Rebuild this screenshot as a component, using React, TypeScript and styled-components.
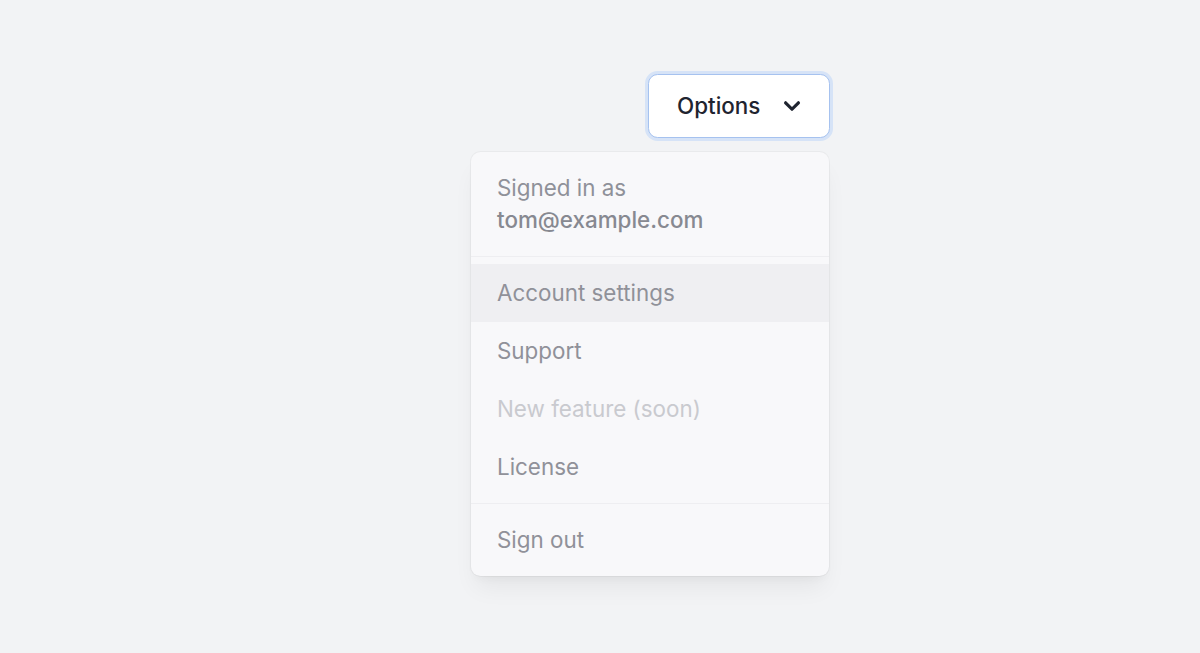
import React from "react";
import styled, { createGlobalStyle } from "styled-components";

const Global = createGlobalStyle`
  html, body { margin: 0; padding: 0; background: #f2f3f5; }
  body { font-family: Inter, "Noto Sans", "Liberation Sans", sans-serif; -webkit-font-smoothing: antialiased; }
`;

const Page = styled.div`
  width: 1200px;
  height: 653px;
  box-sizing: border-box;
  display: flex;
  align-items: flex-start;
  padding: 74px 0 0 648px;
`;

const MenuRoot = styled.div`
  position: relative;
  display: inline-block;
`;

const Trigger = styled.button`
  display: inline-flex;
  align-items: center;
  justify-content: flex-start;
  box-sizing: border-box;
  width: 182px;
  height: 64px;
  padding: 0 0 0 28px;
  background: #ffffff;
  border: 1.6px solid #a6c2ef;
  border-radius: 9.6px;
  box-shadow: 0 0 0 3px #d6e3f7;
  font-family: inherit;
  font-size: 22.4px;
  font-weight: 500;
  line-height: 32px;
  color: #1f2430;
  cursor: pointer;
`;

const Chevron = styled.svg`
  width: 32px;
  height: 32px;
  margin-left: 16px;
  fill: #1f2430;
`;

const Panel = styled.div`
  position: absolute;
  right: 1px;
  top: calc(100% + 14px);
  width: 358px;
  background: #f8f8fa;
  border-radius: 9.6px;
  box-shadow: 0 0 0 1px rgba(0, 0, 0, 0.035), 0 16px 24px -5px rgba(0, 0, 0, 0.06),
    0 6px 10px -4px rgba(0, 0, 0, 0.04);
  overflow: hidden;
`;

const Header = styled.div`
  padding: 20px 26px 20px;
  font-size: 22.4px;
  line-height: 32px;
  color: #8f9199;
  border-bottom: 1.5px solid #eeeef1;
`;

const Email = styled.div`
  font-weight: 500;
  color: #878991;
`;

const Group = styled.div<{ $last?: boolean }>`
  padding: 7px 0;
  border-bottom: ${(p) => (p.$last ? "none" : "1.5px solid #eeeef1")};
`;

const Item = styled.div<{ $active?: boolean; $disabled?: boolean }>`
  padding: 13px 26px;
  font-size: 22.4px;
  line-height: 32px;
  color: ${(p) => (p.$disabled ? "#c9cacf" : "#909199")};
  background: ${(p) => (p.$active ? "#efeff2" : "transparent")};
`;

export default function App() {
  return (
    <>
      <Global />
      <Page>
        <MenuRoot>
          <Trigger>
            Options
            <Chevron viewBox="0 0 20 20" aria-hidden="true">
              <path
                fillRule="evenodd"
                d="M5.293 7.293a1 1 0 011.414 0L10 10.586l3.293-3.293a1 1 0 111.414 1.414l-4 4a1 1 0 01-1.414 0l-4-4a1 1 0 010-1.414z"
                clipRule="evenodd"
              />
            </Chevron>
          </Trigger>
          <Panel>
            <Header>
              <div>Signed in as</div>
              <Email>tom@example.com</Email>
            </Header>
            <Group>
              <Item $active>Account settings</Item>
              <Item>Support</Item>
              <Item $disabled>New feature (soon)</Item>
              <Item>License</Item>
            </Group>
            <Group $last>
              <Item>Sign out</Item>
            </Group>
          </Panel>
        </MenuRoot>
      </Page>
    </>
  );
}
